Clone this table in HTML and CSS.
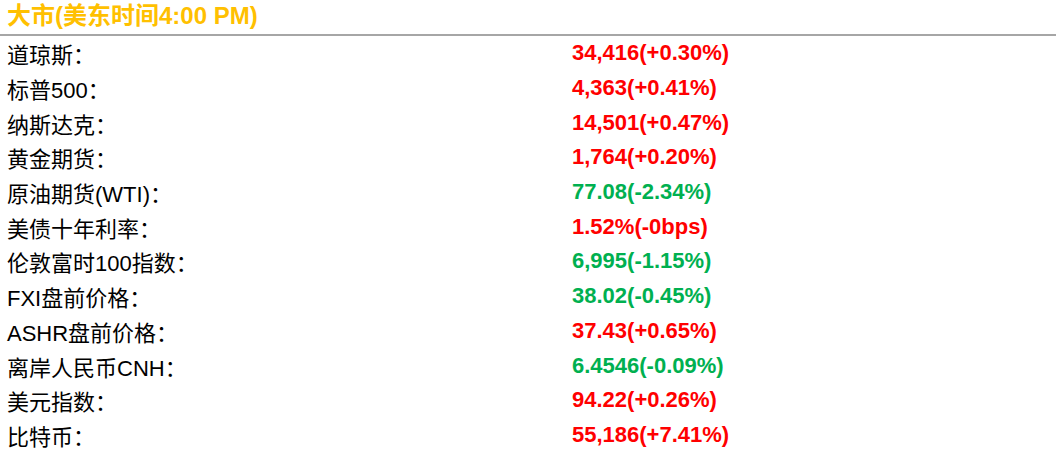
FILE: index.html
```html
<!DOCTYPE html>
<html lang="zh">
<head>
<meta charset="utf-8">
<link rel="stylesheet" href="styles.css">
</head>
<body>
<div class="header">大市(美东时间4:00 PM)</div>
<div class="table">
  <div class="label">道琼斯：</div><div class="val up">34,416(+0.30%)</div>
  <div class="label">标普500：</div><div class="val up">4,363(+0.41%)</div>
  <div class="label">纳斯达克：</div><div class="val up">14,501(+0.47%)</div>
  <div class="label">黄金期货：</div><div class="val up">1,764(+0.20%)</div>
  <div class="label">原油期货(WTI)：</div><div class="val down">77.08(-2.34%)</div>
  <div class="label">美债十年利率：</div><div class="val up">1.52%(-0bps)</div>
  <div class="label">伦敦富时100指数：</div><div class="val down">6,995(-1.15%)</div>
  <div class="label">FXI盘前价格：</div><div class="val down">38.02(-0.45%)</div>
  <div class="label">ASHR盘前价格：</div><div class="val up">37.43(+0.65%)</div>
  <div class="label">离岸人民币CNH：</div><div class="val down">6.4546(-0.09%)</div>
  <div class="label">美元指数：</div><div class="val up">94.22(+0.26%)</div>
  <div class="label">比特币：</div><div class="val up">55,186(+7.41%)</div>
</div>
</body>
</html>
```
FILE: styles.css
```css
html, body {
  margin: 0;
  padding: 0;
  background: #fff;
}
body {
  font-family: "Liberation Sans", "Noto Sans CJK SC", sans-serif;
  font-size: 22px;
  color: #000;
}
.header {
  color: #FFC000;
  font-size: 24px;
  font-weight: bold;
  padding: 0 7px;
  height: 34px;
  line-height: 32px;
  border-bottom: 2px solid #a6a6a6;
}
.table {
  display: grid;
  grid-template-columns: 572px 1fr;
  grid-auto-rows: 34.7px;
  align-items: center;
}
.label {
  padding-left: 7px;
}
.val {
  font-weight: bold;
}
.up { color: #FF0000; }
.down { color: #00B050; }
```
